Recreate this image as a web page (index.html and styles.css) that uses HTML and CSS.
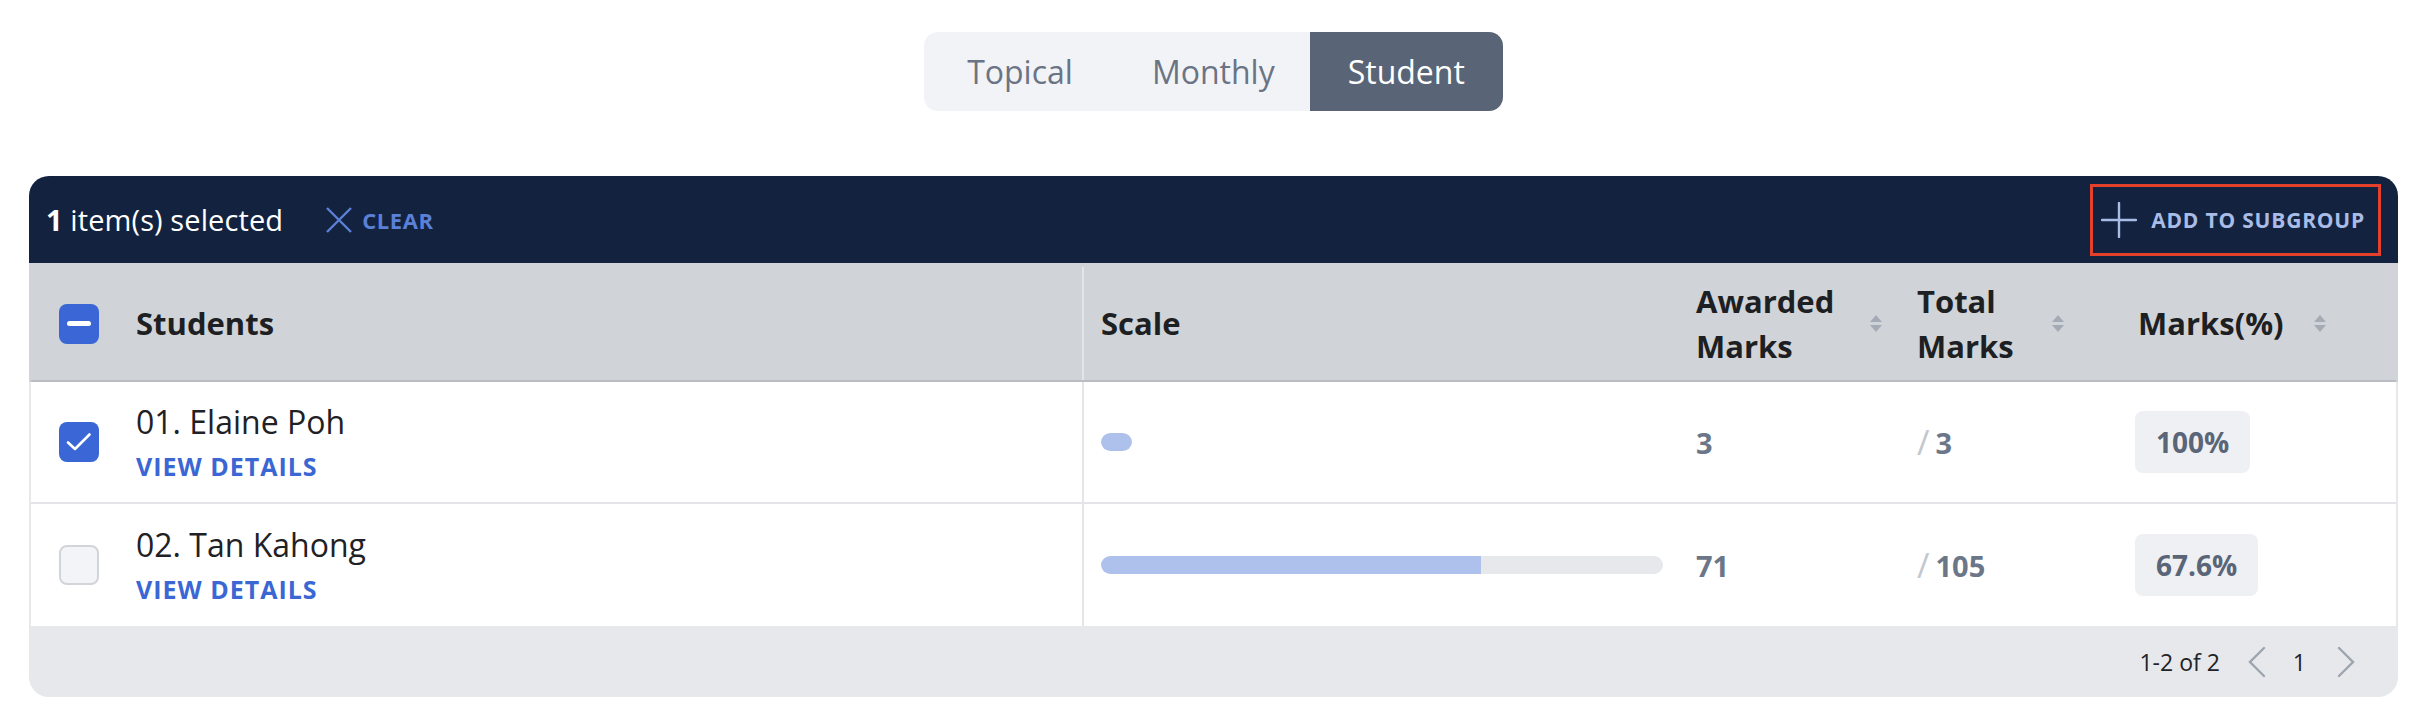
FILE: index.html
```html
<!DOCTYPE html>
<html lang="en">
<head>
<meta charset="utf-8">
<title>Students</title>
<link rel="stylesheet" href="styles.css">
</head>
<body>
<div class="page">
  <div class="toggle-wrap">
    <div class="toggle">
      <button class="seg seg-topical">Topical</button>
      <button class="seg seg-monthly">Monthly</button>
      <button class="seg active">Student</button>
    </div>
  </div>

  <div class="card">
    <div class="selbar">
      <div class="sel-left">
        <span class="sel-count"><b>1</b> item(s) selected</span>
        <button class="clear-btn">
          <svg class="x-icon" viewBox="0 0 28 28" width="28" height="28"><path d="M2 2 L26 26 M26 2 L2 26" stroke="currentColor" stroke-width="2.4" fill="none"/></svg>
          <span>CLEAR</span>
        </button>
      </div>
      <button class="add-btn">
        <svg class="plus-icon" viewBox="0 0 36 36" width="36" height="36"><path d="M18 1 V35 M1 18 H35" stroke="currentColor" stroke-width="2.4" fill="none" stroke-linecap="round"/></svg>
        <span>ADD TO SUBGROUP</span>
      </button>
    </div>

    <div class="thead">
      <div class="grid hrow">
        <div class="cell c-check"><span class="cb cb-partial"><i class="minus"></i></span></div>
        <div class="cell c-name"><span class="th">Students</span></div>
        <div class="cell c-scale"><span class="th">Scale</span></div>
        <div class="cell c-awd"><span class="th lbl-awd">Awarded<br>Marks</span><span class="sort"><i class="up"></i><i class="down"></i></span></div>
        <div class="cell c-tot"><span class="th lbl-tot">Total<br>Marks</span><span class="sort"><i class="up"></i><i class="down"></i></span></div>
        <div class="cell c-pct"><span class="th lbl-pct">Marks(%)</span><span class="sort"><i class="up"></i><i class="down"></i></span></div>
      </div>
    </div>

    <div class="tbody">
      <div class="grid brow">
        <div class="cell c-check"><span class="cb cb-checked"><svg viewBox="0 0 30 30" width="30" height="30"><path d="M4 15.5 L11 22 L25.5 7.5" stroke="#fff" stroke-width="2.6" fill="none" stroke-linecap="round" stroke-linejoin="round"/></svg></span></div>
        <div class="cell c-name"><div class="name">01. Elaine Poh</div><a class="details">VIEW DETAILS</a></div>
        <div class="cell c-scale"><div class="track short"><div class="fill" style="width:100%"></div></div></div>
        <div class="cell c-awd"><span class="num">3</span></div>
        <div class="cell c-tot"><span class="slash">/</span><span class="num">3</span></div>
        <div class="cell c-pct"><span class="badge">100%</span></div>
      </div>
      <div class="grid brow last">
        <div class="cell c-check"><span class="cb cb-empty"></span></div>
        <div class="cell c-name"><div class="name">02. Tan Kahong</div><a class="details">VIEW DETAILS</a></div>
        <div class="cell c-scale"><div class="track"><div class="fill" style="width:67.6%"></div></div></div>
        <div class="cell c-awd"><span class="num">71</span></div>
        <div class="cell c-tot"><span class="slash">/</span><span class="num">105</span></div>
        <div class="cell c-pct"><span class="badge">67.6%</span></div>
      </div>
    </div>

    <div class="footer">
      <span class="range">1-2 of 2</span>
      <svg class="chev" viewBox="0 0 20 32" width="20" height="32"><path d="M17 2 L3 16 L17 30" stroke="currentColor" stroke-width="2.4" fill="none" stroke-linecap="round"/></svg>
      <span class="pg">1</span>
      <svg class="chev" viewBox="0 0 20 32" width="20" height="32"><path d="M3 2 L17 16 L3 30" stroke="currentColor" stroke-width="2.4" fill="none" stroke-linecap="round"/></svg>
    </div>
  </div>
</div>
</body>
</html>
```

FILE: styles.css
```css
* { box-sizing: border-box; }
html, body { margin: 0; padding: 0; background: #ffffff; }
body { font-family: "Open Sans", "Noto Sans", sans-serif; color: #1f2124; }

.page { padding: 32px 26px 0 29px; }

.toggle-wrap { display: flex; justify-content: center; }
.toggle {
  display: flex;
  height: 79px;
  background: #f2f3f7;
  border-radius: 14px;
  overflow: hidden;
}
.seg {
  border: 0;
  background: transparent;
  font-family: "Open Sans", sans-serif;
  font-size: 32px;
  color: #6b7484;
  padding: 0 37px;
  cursor: pointer;
}
.seg-topical { padding-left: 43px; padding-right: 40px; }
.seg-monthly { padding-left: 39px; padding-right: 35px; }
.seg.active { background: #596577; color: #ffffff; padding: 0 38px; }

.card {
  margin-top: 65px;
  border-radius: 20px;
  overflow: hidden;
  background: #e7e8ec;
}

.selbar {
  height: 87px;
  background: #13233f;
  display: flex;
  align-items: center;
  justify-content: space-between;
  padding: 0 17px 0 17px;
}
.sel-left { display: flex; align-items: center; gap: 42px; }
.sel-count { color: #ffffff; font-size: 29px; letter-spacing: 0.1px; }
.sel-count b { font-weight: 700; }
.clear-btn {
  display: flex; align-items: center; gap: 9px;
  background: transparent; border: 0; padding: 0;
  color: #5b80d8;
  font-family: "Open Sans", sans-serif;
  font-weight: 700; font-size: 22px; letter-spacing: 0.6px;
}
.add-btn {
  display: flex; align-items: center; gap: 14px;
  height: 72px;
  background: transparent;
  border: 3px solid #e5402c;
  padding: 0 13px 0 8px;
  color: #a9bce8;
  font-family: "Open Sans", sans-serif;
  font-weight: 700; font-size: 21px; letter-spacing: 0.8px;
}

.grid {
  display: grid;
  grid-template-columns: 89px 962px 598px 221px 221px 1fr;
}
.thead { background: #d0d3d8; }
.hrow {
  height: 119px;
  margin: 0 2px;
  padding-top: 4px;
  border-bottom: 2px solid #b9bcc2;
}
.cell { display: flex; align-items: center; }
.c-check { padding-left: 28px; }
.c-name { padding-left: 16px; }
.c-scale { padding-left: 17px; padding-right: 17px; border-left: 2px solid #e3e5e9; }
.c-awd, .c-tot, .c-pct { padding-left: 16px; }

.th {
  font-weight: 700;
  font-size: 31px;
  line-height: 45px;
  color: #1e1f22;
}
.lbl-awd { width: 174px; }
.lbl-tot { width: 135px; }
.lbl-pct { width: 176px; }

.sort { display: flex; flex-direction: column; gap: 3px; }
.sort i { display: block; width: 0; height: 0; border-left: 6px solid transparent; border-right: 6px solid transparent; }
.sort .up { border-bottom: 7px solid #a4abb5; }
.sort .down { border-top: 7px solid #a4abb5; }

.cb {
  width: 40px; height: 40px;
  border-radius: 8px;
  display: flex; align-items: center; justify-content: center;
}
.cb-partial, .cb-checked { background: #3a66d6; }
.cb-empty { background: #f3f4f7; border: 2px solid #d1d4d9; }
.minus { display: block; width: 24px; height: 5px; border-radius: 3px; background: #ffffff; }

.tbody { background: #e7e8ec; padding: 0 2px; }
.brow {
  height: 122px;
  background: #ffffff;
  border-bottom: 2px solid #e3e5e9;
}
.brow.last { border-bottom: 0; }
.brow .c-name { flex-direction: column; align-items: flex-start; justify-content: center; }
.name { font-size: 32px; line-height: 44px; color: #1f2124; }
.details {
  font-weight: 700; font-size: 25px; letter-spacing: 1px;
  color: #3a67d4; line-height: 36px; margin-top: 4px;
}

.track {
  width: 562px; height: 18px;
  border-radius: 9px;
  background: #e7e8ec;
  overflow: hidden;
}
.track.short { width: 31px; }
.fill { height: 100%; background: #adc1ec; border-radius: 9px 0 0 9px; }
.track.short .fill { border-radius: 9px; }

.num { font-weight: 700; font-size: 29px; color: #6b7689; }
.num-wide { letter-spacing: 0.5px; }
.slash { font-size: 34px; color: #c3c8cf; margin-right: 6px; }
.badge {
  display: inline-flex; align-items: center;
  height: 62px; padding: 0 21px;
  margin-left: -3px;
  background: #eef0f3;
  border-radius: 8px;
  font-weight: 700; font-size: 28px;
  color: #5a6577;
}

.footer {
  height: 71px;
  display: flex; align-items: center; justify-content: flex-end;
  padding-right: 42px;
  color: #222326;
  font-size: 23px;
}
.range { margin-right: 27px; }
.pg { margin: 0 30px 0 26px; }
.chev { color: #9ca4ae; }
```
